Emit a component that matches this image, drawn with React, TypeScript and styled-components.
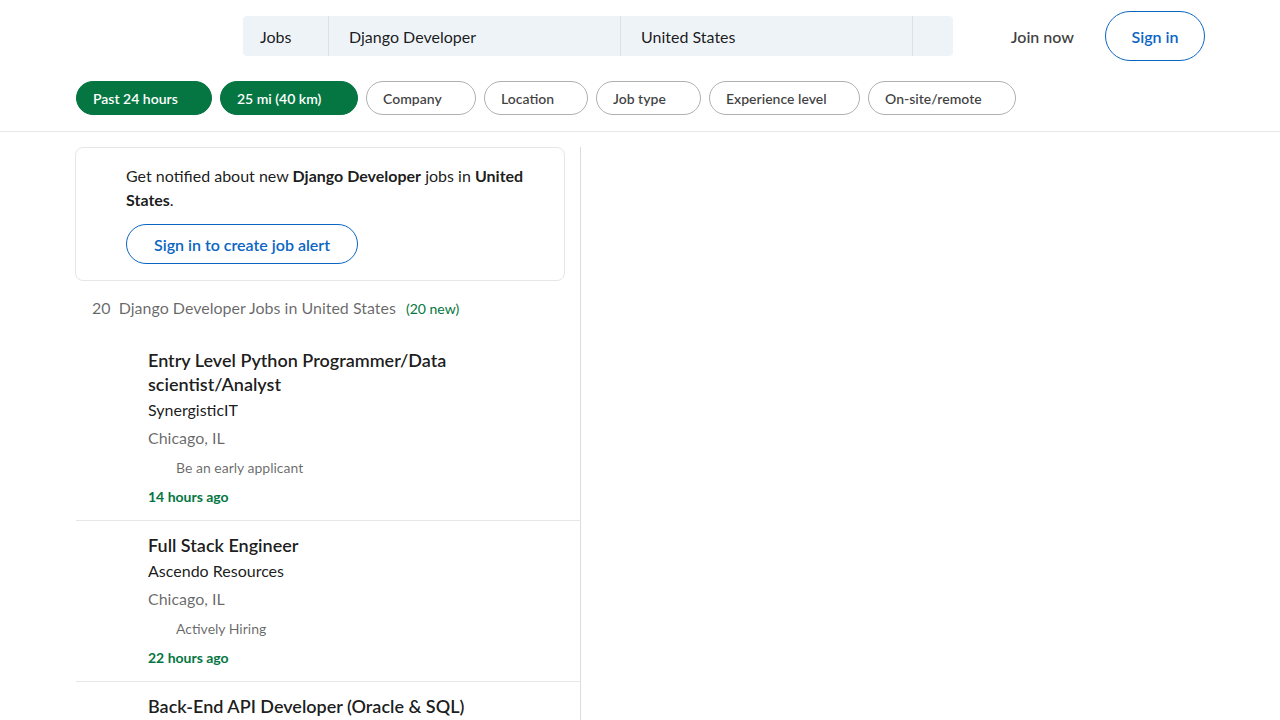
import React from "react";
import styled, { createGlobalStyle } from "styled-components";

const Global = createGlobalStyle`
  html, body { margin: 0; padding: 0; background: #fff; }
  body { font-family: Lato, "Noto Sans", Arial, sans-serif; color: rgba(0,0,0,0.9); }
  * { box-sizing: border-box; }
`;

const Header = styled.header`
  border-bottom: 1px solid #e8e8e8;
  padding: 0 75px 16px 76px;
`;

const TopRow = styled.div`
  display: flex;
  align-items: center;
  height: 72px;
  padding-left: 167px;
`;

const SearchBar = styled.div`
  display: flex;
  height: 40px;
  width: 710px;
  background: #eef3f8;
  border-radius: 4px;
`;

const SearchCell = styled.div<{ $w: number; $pl: number }>`
  width: ${(p) => p.$w}px;
  padding-left: ${(p) => p.$pl}px;
  display: flex;
  align-items: center;
  font-size: 16px;
  color: rgba(0, 0, 0, 0.9);
  & + & { border-left: 1px solid #dce1e6; }
`;

const Nav = styled.div`
  margin-left: auto;
  display: flex;
  align-items: center;
  gap: 31px;
`;

const JoinNow = styled.span`
  font-size: 16px;
  font-weight: 600;
  color: rgba(0, 0, 0, 0.75);
`;

const SignIn = styled.button`
  height: 50px;
  width: 100px;
  border-radius: 25px;
  border: 1px solid #0a66c2;
  background: #fff;
  color: #0a66c2;
  font-family: inherit;
  font-size: 16px;
  font-weight: 600;
`;

const Filters = styled.div`
  display: flex;
  gap: 8px;
  margin-top: 9px;
`;

const Pill = styled.button<{ $active?: boolean; $w: number }>`
  height: 34px;
  width: ${(p) => p.$w}px;
  border-radius: 17px;
  padding: 0 0 0 16px;
  text-align: left;
  font-family: inherit;
  font-size: 14px;
  font-weight: 600;
  border: 1px solid ${(p) => (p.$active ? "#057642" : "#b0b0b0")};
  background: ${(p) => (p.$active ? "#057642" : "#fff")};
  color: ${(p) => (p.$active ? "#fff" : "rgba(0,0,0,0.75)")};
`;

const Main = styled.main`
  padding-left: 75px;
`;

const Column = styled.section`
  width: 506px;
  border-right: 1px solid #dcdcdc;
  margin-top: 15px;
  min-height: 600px;
`;

const AlertCard = styled.div`
  width: 490px;
  border: 1px solid #e6e6e6;
  border-radius: 8px;
  padding: 16px 24px 16px 50px;
`;

const AlertText = styled.p`
  margin: 0;
  font-size: 16px;
  line-height: 24px;
  color: rgba(0, 0, 0, 0.9);
  b { font-weight: 700; }
`;

const AlertButton = styled.button`
  margin-top: 12px;
  height: 40px;
  padding: 0 27px;
  border-radius: 20px;
  border: 1px solid #0a66c2;
  background: #fff;
  color: #0a66c2;
  font-family: inherit;
  font-size: 16px;
  font-weight: 600;
`;

const Count = styled.div`
  padding: 16px 0 0 17px;
  height: 55px;
  font-size: 16px;
  line-height: 22px;
  color: rgba(0, 0, 0, 0.6);
`;

const NewCount = styled.span`
  font-size: 14px;
  color: #057642;
  margin-left: 6px;
`;

const JobList = styled.ul`
  list-style: none;
  margin: 0;
  padding: 0;
`;

const Job = styled.li`
  padding: 12px 24px 13px 72px;
  border-bottom: 1px solid #e6e6e6;
  width: 505px;
  margin-left: 1px;
`;

const Title = styled.h3`
  margin: 0;
  font-size: 18px;
  font-weight: 600;
  line-height: 24px;
  color: rgba(0, 0, 0, 0.9);
`;

const Company = styled.div`
  margin-top: 2px;
  font-size: 16px;
  line-height: 24px;
  color: rgba(0, 0, 0, 0.9);
`;

const Location = styled.div`
  margin-top: 4px;
  font-size: 16px;
  line-height: 24px;
  color: rgba(0, 0, 0, 0.6);
`;

const Insight = styled.div`
  margin-top: 8px;
  padding-left: 28px;
  font-size: 14px;
  line-height: 20px;
  color: rgba(0, 0, 0, 0.6);
`;

const Time = styled.div`
  margin-top: 9px;
  font-size: 14px;
  font-weight: 700;
  line-height: 20px;
  color: #057642;
`;

const jobs = [
  { title: "Entry Level Python Programmer/Data scientist/Analyst", company: "SynergisticIT", location: "Chicago, IL", insight: "Be an early applicant", time: "14 hours ago" },
  { title: "Full Stack Engineer", company: "Ascendo Resources", location: "Chicago, IL", insight: "Actively Hiring", time: "22 hours ago" },
  { title: "Back-End API Developer (Oracle & SQL)", company: "Insight Global", location: "Chicago, IL", insight: "Be an early applicant", time: "1 day ago" },
];

const filters: { label: string; w: number; active?: boolean }[] = [
  { label: "Past 24 hours", w: 136, active: true },
  { label: "25 mi (40 km)", w: 138, active: true },
  { label: "Company", w: 110 },
  { label: "Location", w: 104 },
  { label: "Job type", w: 105 },
  { label: "Experience level", w: 151 },
  { label: "On-site/remote", w: 148 },
];

export default function App() {
  return (
    <>
      <Global />
      <Header>
        <TopRow>
          <SearchBar>
            <SearchCell $w={85} $pl={17}>Jobs</SearchCell>
            <SearchCell $w={292} $pl={20}>Django Developer</SearchCell>
            <SearchCell $w={292} $pl={20}>United States</SearchCell>
            <SearchCell $w={41} $pl={0} />
          </SearchBar>
          <Nav>
            <JoinNow>Join now</JoinNow>
            <SignIn>Sign in</SignIn>
          </Nav>
        </TopRow>
        <Filters>
          {filters.map((f) => (
            <Pill key={f.label} $w={f.w} $active={f.active}>
              {f.label}
            </Pill>
          ))}
        </Filters>
      </Header>
      <Main>
        <Column>
          <AlertCard>
            <AlertText>
              Get notified about new <b>Django Developer</b> jobs in <b>United States</b>.
            </AlertText>
            <AlertButton>Sign in to create job alert</AlertButton>
          </AlertCard>
          <Count>
            20&nbsp; Django Developer Jobs in United States <NewCount>(20 new)</NewCount>
          </Count>
          <JobList>
            {jobs.map((j) => (
              <Job key={j.title}>
                <Title>{j.title}</Title>
                <Company>{j.company}</Company>
                <Location>{j.location}</Location>
                <Insight>{j.insight}</Insight>
                <Time>{j.time}</Time>
              </Job>
            ))}
          </JobList>
        </Column>
      </Main>
    </>
  );
}
